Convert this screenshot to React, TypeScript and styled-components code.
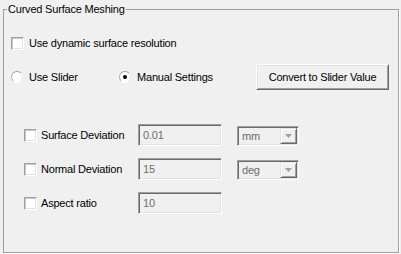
import React from "react";
import styled, { createGlobalStyle } from "styled-components";

const Global = createGlobalStyle`
  html, body { margin: 0; padding: 0; background: #f0f0f0; }
  body { font-family: "Liberation Sans", Arial, sans-serif; font-size: 11px; letter-spacing: -0.2px; color: #000; }
  * { box-sizing: border-box; }
`;

const Page = styled.div`
  width: 401px;
  height: 254px;
  padding: 2px 2px 1px 3px;
  background: #f0f0f0;
`;

const Group = styled.fieldset`
  margin: 0;
  padding: 0;
  height: 251px;
  border: 1px solid #a0a0a0;
  border-radius: 0;
  box-shadow: 1px 1px 0 #fff;
`;

const Legend = styled.legend`
  margin-left: 3px;
  padding: 0 1px;
  font-size: 11px;
  line-height: 14px;
`;

const Content = styled.div`
  padding-left: 7px;
`;

const CheckRow = styled.label<{ $top: number }>`
  display: flex;
  align-items: center;
  gap: 5px;
  height: 14px;
  margin-top: ${(p) => p.$top}px;
  white-space: nowrap;
`;

const Box = styled.span`
  width: 13px;
  height: 13px;
  flex: none;
  background: #fff;
  border-style: solid;
  border-width: 1px;
  border-color: #a0a0a0 #fff #fff #a0a0a0;
  box-shadow: inset 1px 1px 0 #c8c8c8, inset -1px -1px 0 #e3e3e3;
`;

const RadioRow = styled.div`
  display: flex;
  align-items: center;
  height: 26px;
  margin-top: 14px;
`;

const RadioLabel = styled.label<{ $w: number }>`
  display: flex;
  align-items: center;
  gap: 6px;
  width: ${(p) => p.$w}px;
  white-space: nowrap;
`;

const Dot = styled.span<{ $on?: boolean }>`
  position: relative;
  width: 12px;
  height: 12px;
  flex: none;
  border-radius: 50%;
  background: #fff;
  border: 1px solid;
  border-color: #a0a0a0 #e8e8e8 #fff #b0b0b0;
  &::after {
    content: "";
    display: ${(p) => (p.$on ? "block" : "none")};
    position: absolute;
    left: 3px;
    top: 3px;
    width: 4px;
    height: 4px;
    border-radius: 50%;
    background: #000;
  }
`;

const Button = styled.button`
  margin-left: 37px;
  width: 133px;
  height: 26px;
  padding: 0;
  font-family: inherit;
  font-size: 11px;
  letter-spacing: -0.2px;
  color: #000;
  background: #f0f0f0;
  border-style: solid;
  border-width: 1px;
  border-color: #fff #696969 #696969 #fff;
  box-shadow: inset 1px 1px 0 #e3e3e3, inset -1px -1px 0 #a0a0a0;
`;

const Rows = styled.div`
  display: flex;
  flex-direction: column;
  gap: 12px;
  margin-top: 34px;
  padding-left: 13px;
`;

const ParamRow = styled.div`
  display: grid;
  grid-template-columns: 13px 93px 84px 73px;
  column-gap: 4px;
  align-items: center;
  height: 22px;
  & > :nth-child(4) { margin-left: 11px; }
`;

const Label = styled.span`
  white-space: nowrap;
`;

const Field = styled.div`
  height: 22px;
  padding: 0 4px;
  display: flex;
  align-items: center;
  color: #6d6d6d;
  background: #f0f0f0;
  border-style: solid;
  border-width: 1px;
  border-color: #a0a0a0 #fff #fff #a0a0a0;
  box-shadow: inset 1px 1px 0 #696969, inset -1px -1px 0 #e3e3e3;
`;

const Select = styled.div`
  height: 20px;
  margin-top: 2px;
  display: flex;
  align-items: center;
  justify-content: space-between;
  padding: 1px 1px 1px 4px;
  color: #6d6d6d;
  background: #f0f0f0;
  border-style: solid;
  border-width: 1px;
  border-color: #a0a0a0 #fff #fff #a0a0a0;
  box-shadow: inset 1px 1px 0 #696969, inset -1px -1px 0 #e3e3e3;
`;

const Arrow = styled.span`
  width: 17px;
  height: 16px;
  display: flex;
  align-items: center;
  justify-content: center;
  background: #f0f0f0;
  border-style: solid;
  border-width: 1px;
  border-color: #e3e3e3 #696969 #696969 #e3e3e3;
  box-shadow: inset 1px 1px 0 #fff, inset -1px -1px 0 #a0a0a0;
`;

const Tri = () => (
  <svg width="7" height="4" viewBox="0 0 7 4">
    <path d="M0 0H7L3.5 4Z" fill="#a0a0a0" />
  </svg>
);

const params = [
  { label: "Surface Deviation", value: "0.01", unit: "mm" },
  { label: "Normal Deviation", value: "15", unit: "deg" },
  { label: "Aspect ratio", value: "10", unit: null as string | null },
];

export default function App() {
  return (
    <Page>
      <Global />
      <Group>
        <Legend>Curved Surface Meshing</Legend>
        <Content>
          <CheckRow $top={20}>
            <Box />
            <span>Use dynamic surface resolution</span>
          </CheckRow>
          <RadioRow>
            <RadioLabel $w={108}>
              <Dot />
              <span>Use Slider</span>
            </RadioLabel>
            <RadioLabel $w={100}>
              <Dot $on />
              <span>Manual Settings</span>
            </RadioLabel>
            <Button>Convert to Slider Value</Button>
          </RadioRow>
          <Rows>
            {params.map((p) => (
              <ParamRow key={p.label}>
                <Box />
                <Label>{p.label}</Label>
                <Field>{p.value}</Field>
                {p.unit ? (
                  <Select>
                    <span>{p.unit}</span>
                    <Arrow>
                      <Tri />
                    </Arrow>
                  </Select>
                ) : (
                  <span />
                )}
              </ParamRow>
            ))}
          </Rows>
        </Content>
      </Group>
    </Page>
  );
}
